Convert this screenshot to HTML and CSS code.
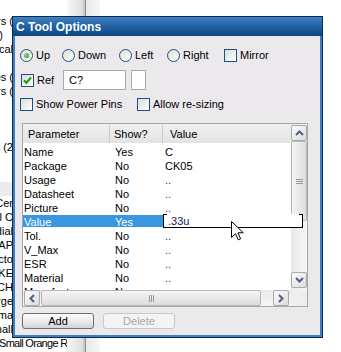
FILE: index.html
```html
<!DOCTYPE html>
<html lang="en">
<head>
    <meta charset="UTF-8">
    <meta name="viewport" content="width=device-width, initial-scale=1.0">
    <title>C Tool Options</title>
    <link rel="stylesheet" href="styles.css">
</head>
<body>
    <div class="desktop">
        <div class="bg-list">
            <div class="bg-row">Capacitors (</div>
            <div class="bg-row short">(1)</div>
            <div class="bg-row">Electrical</div>
            <div class="bg-row"></div>
            <div class="bg-row">Diodes (</div>
            <div class="bg-row">Inductors (</div>
            <div class="bg-row"></div>
            <div class="bg-row"></div>
            <div class="bg-row"></div>
            <div class="bg-row">Resistors (2</div>
            <div class="bg-row"></div>
            <div class="bg-row"></div>
            <div class="bg-row band"></div>
            <div class="bg-row">Disc Cer</div>
            <div class="bg-row">Axial C</div>
            <div class="bg-row">Radial</div>
            <div class="bg-row">CAP</div>
            <div class="bg-row">Inducto</div>
            <div class="bg-row">SPIKE</div>
            <div class="bg-row">SWITCH</div>
            <div class="bg-row">Large</div>
            <div class="bg-row">Sma</div>
            <div class="bg-row">Small</div>
            <div class="bg-row full">Small Orange Resistor</div>
        </div>
        <div class="bg-bar"></div>
    </div>

    <div class="dialog">
        <div class="title-bar">C Tool Options</div>
        <div class="dlg-body">
            <div class="opt-row">
                <label class="opt w-up"><span class="radio on"></span>Up</label>
                <label class="opt w-down"><span class="radio"></span>Down</label>
                <label class="opt w-left"><span class="radio"></span>Left</label>
                <label class="opt w-right"><span class="radio"></span>Right</label>
                <label class="opt"><span class="check"></span>Mirror</label>
            </div>
            <div class="ref-row">
                <label class="opt w-ref">
                    <span class="check">
                        <svg width="11" height="11" viewBox="0 0 11 11"><path d="M2 5.2 L4.4 7.8 L9 2.6" fill="none" stroke="#21a121" stroke-width="2.2"/></svg>
                    </span>Ref
                </label>
                <div class="field ref-field">C?</div>
                <div class="field small-field"></div>
            </div>
            <div class="flag-row">
                <label class="opt w-power"><span class="check"></span>Show Power Pins</label>
                <label class="opt"><span class="check"></span>Allow re-sizing</label>
            </div>

            <div class="param-list">
                <div class="table">
                    <div class="row head"><span class="c1">Parameter</span><span class="c2">Show?</span><span class="c3">Value</span></div>
                    <div class="row"><span class="c1">Name</span><span class="c2">Yes</span><span class="c3">C</span></div>
                    <div class="row"><span class="c1">Package</span><span class="c2">No</span><span class="c3">CK05</span></div>
                    <div class="row"><span class="c1">Usage</span><span class="c2">No</span><span class="c3 dots">..</span></div>
                    <div class="row"><span class="c1">Datasheet</span><span class="c2">No</span><span class="c3 dots">..</span></div>
                    <div class="row"><span class="c1">Picture</span><span class="c2">No</span><span class="c3 dots">..</span></div>
                    <div class="row selected"><span class="c1">Value</span><span class="c2">Yes</span><span class="c3"></span></div>
                    <div class="row"><span class="c1">Tol.</span><span class="c2">No</span><span class="c3 dots">..</span></div>
                    <div class="row"><span class="c1">V_Max</span><span class="c2">No</span><span class="c3 dots">..</span></div>
                    <div class="row"><span class="c1">ESR</span><span class="c2">No</span><span class="c3 dots">..</span></div>
                    <div class="row"><span class="c1">Material</span><span class="c2">No</span><span class="c3 dots">..</span></div>
                    <div class="row"><span class="c1">Manufacturer</span><span class="c2">No</span><span class="c3 dots">..</span></div>
                </div>
                <div class="vscroll">
                    <div class="sb-btn">
                        <svg width="9" height="6" viewBox="0 0 9 6"><path d="M1 5 L4.5 1.5 L8 5" fill="none" stroke="#4d6185" stroke-width="2"/></svg>
                    </div>
                    <div class="thumb v-thumb"><span class="grip"></span></div>
                    <div class="track"></div>
                    <div class="sb-btn">
                        <svg width="9" height="6" viewBox="0 0 9 6"><path d="M1 1 L4.5 4.5 L8 1" fill="none" stroke="#4d6185" stroke-width="2"/></svg>
                    </div>
                </div>
                <div class="hscroll">
                    <div class="sb-btn first">
                        <svg width="6" height="9" viewBox="0 0 6 9"><path d="M5 1 L1.5 4.5 L5 8" fill="none" stroke="#4d6185" stroke-width="2"/></svg>
                    </div>
                    <div class="thumb h-thumb"><span class="grip"></span></div>
                    <div class="track"></div>
                    <div class="sb-btn last">
                        <svg width="6" height="9" viewBox="0 0 6 9"><path d="M1 1 L4.5 4.5 L1 8" fill="none" stroke="#4d6185" stroke-width="2"/></svg>
                    </div>
                </div>
                <div class="corner"></div>
                <div class="cell-editor">.33u</div>
            </div>

            <div class="btn-row">
                <button class="btn">Add</button>
                <button class="btn" disabled>Delete</button>
            </div>
        </div>
    </div>

    <svg class="cursor" width="14" height="21" viewBox="0 0 14 21">
        <path d="M0.5 0.5 V16.5 L4.5 12.7 L7.2 18.8 L9.6 17.8 L7 11.8 H12.3 Z" fill="#fff" stroke="#000" stroke-width="1"/>
    </svg>
</body>
</html>
```

FILE: styles.css
```css
* {
    box-sizing: border-box;
}
body {
    margin: 0;
    width: 341px;
    height: 352px;
    overflow: hidden;
    position: relative;
    background-color: #fff;
    font-family: "Liberation Sans", Arial, sans-serif;
    font-size: 11px;
    color: #000;
}

/* window behind the dialog */
.desktop {
    display: flex;
    height: 352px;
}
.bg-list {
    width: 67px;
    overflow: hidden;
    padding-top: 14px;
}
.bg-row {
    width: 13px;
    height: 14px;
    line-height: 14px;
    display: flex;
    justify-content: flex-end;
    white-space: nowrap;
}
.bg-row.short {
    width: 3px;
}
.bg-row.band {
    width: 67px;
    background-color: #ebebeb;
}
.bg-row.full {
    width: 68px;
    margin-left: -1px;
    justify-content: flex-start;
    letter-spacing: -0.7px;
}
.bg-bar {
    width: 33px;
    background: linear-gradient(to right, #f7f7f7 0, #dedede 16px, #c8c8c8 16px, #c8c8c8 18px, #8f8f8f 18px, #8f8f8f 19px, #e8e8e8 19px, #f7f7f7 33px);
}

/* dialog */
.dialog {
    position: absolute;
    left: 12px;
    top: 16px;
    width: 311px;
    height: 322px;
    border: 1px solid #0b2a4c;
    background-color: #3b80c4;
    padding: 0 2px 2px;
    display: flex;
    flex-direction: column;
}
.title-bar {
    height: 19px;
    margin: 0 -2px;
    padding: 1px 0 0 3px;
    line-height: 18px;
    background: linear-gradient(#3f80c2, #2564a5 45%, #0a4680);
    color: #fff;
    font-weight: bold;
    font-size: 12px;
}
.dlg-body {
    flex: 1;
    background-color: #ece9ed;
    padding-top: 12px;
}

.opt {
    display: inline-flex;
    align-items: center;
    gap: 3px;
    white-space: nowrap;
}
.w-up { width: 42px; }
.w-down { width: 57px; }
.w-left { width: 48px; }
.w-right { width: 57px; }
.w-ref { width: 42px; }
.w-power { width: 117px; }

.radio, .check {
    width: 13px;
    height: 13px;
    border: 1px solid #1c5180;
    background: linear-gradient(135deg, #dcdcd7, #fff);
    display: inline-flex;
    align-items: center;
    justify-content: center;
    flex: none;
}
.radio {
    border-radius: 50%;
}
.radio.on::after {
    content: "";
    width: 5px;
    height: 5px;
    border-radius: 50%;
    background: radial-gradient(circle at 35% 35%, #7ee07e, #1f9b1f);
}

.opt-row {
    display: flex;
    height: 14px;
    padding-left: 5px;
    align-items: center;
}
.ref-row {
    display: flex;
    height: 20px;
    margin-top: 8px;
    padding-left: 6px;
    align-items: center;
}
.field {
    height: 20px;
    border: 1px solid #a9a9a9;
    background-color: #fff;
    line-height: 18px;
}
.ref-field {
    width: 63px;
    padding-left: 5px;
}
.small-field {
    width: 15px;
    margin-left: 5px;
}
.flag-row {
    display: flex;
    height: 14px;
    margin-top: 7px;
    padding-left: 5px;
    align-items: center;
}

/* parameter list */
.param-list {
    position: relative;
    width: 286px;
    height: 184px;
    margin: 12px 0 0 7px;
    border: 1px solid #a7a7a7;
    background-color: #fff;
    display: grid;
    grid-template-columns: 268px 16px;
    grid-template-rows: 166px 16px;
}
.table {
    overflow: hidden;
}
.row {
    display: flex;
    height: 14px;
    line-height: 14px;
    padding-top: 2px;
    white-space: nowrap;
}
.row.head {
    height: 19px;
    line-height: 19px;
    padding-top: 1px;
    background: linear-gradient(#f0f0f0, #e3e3e3);
}
.c1 {
    width: 87px;
    padding-left: 1px;
}
.c2 {
    width: 53px;
    padding-left: 5px;
}
.c3 {
    flex: 1;
    padding-left: 2px;
}
.head .c1 {
    padding-left: 5px;
    box-shadow: inset -1px 0 #c9c9c9;
}
.head .c2 {
    padding-left: 4px;
    box-shadow: inset -1px 0 #c9c9c9;
}
.head .c3 {
    padding-left: 7px;
}
.dots {
    color: #3c1481;
}
.row.selected .c1,
.row.selected .c2 {
    background-color: #3b96e0;
    color: #fff;
}

.vscroll {
    display: flex;
    flex-direction: column;
    padding: 1px 0 2px;
    background: linear-gradient(to right, #e8e8e8, #f7f7f7);
}
.hscroll {
    display: flex;
    background: linear-gradient(#e8e8e8, #f7f7f7);
}
.sb-btn {
    width: 16px;
    height: 16px;
    flex: none;
    border: 1px solid #a9a9a9;
    border-radius: 2px;
    background: linear-gradient(135deg, #fbfbfb, #dcdcdc);
    display: flex;
    align-items: center;
    justify-content: center;
}
.sb-btn.first {
    margin-left: 1px;
}
.sb-btn.last {
    margin-right: 2px;
}
.thumb {
    flex: none;
    border: 1px solid #b7b7b7;
    border-radius: 2px;
    display: flex;
    align-items: center;
    justify-content: center;
}
.v-thumb {
    height: 80px;
    background: linear-gradient(to right, #f5f5f5, #dddddd);
}
.h-thumb {
    width: 220px;
    margin-left: 1px;
    background: linear-gradient(#f5f5f5, #dddddd);
}
.track {
    flex: 1;
}
.grip {
    width: 7px;
    height: 5px;
    background: repeating-linear-gradient(#9a9a9a 0 1px, transparent 1px 2px);
}
.h-thumb .grip {
    width: 5px;
    height: 7px;
    background: repeating-linear-gradient(to right, #9a9a9a 0 1px, transparent 1px 2px);
}
.corner {
    background-color: #eeeeee;
}
.cell-editor {
    position: absolute;
    left: 140px;
    top: 90px;
    width: 140px;
    height: 14px;
    padding-left: 4px;
    line-height: 13px;
    background-color: #fff;
    border: 1px solid #000;
    border-top-color: transparent;
    color: #1b1464;
}
.cell-editor::before,
.cell-editor::after {
    content: "";
    position: absolute;
    top: -1px;
    width: 4px;
    height: 1px;
    background-color: #000;
}
.cell-editor::before {
    left: -1px;
}
.cell-editor::after {
    right: -1px;
}

/* buttons */
.btn-row {
    display: flex;
    gap: 9px;
    margin-top: 6px;
    padding-left: 7px;
}
.btn {
    width: 72px;
    height: 16px;
    padding: 0;
    font: inherit;
    line-height: 14px;
    color: #000;
    border: 1px solid #707070;
    border-radius: 3px;
    background: linear-gradient(#fdfdfd, #e8e8e8 60%, #d2d2d2);
}
.btn:disabled {
    color: #a8a8a8;
    border-color: #c8c8c8;
    background: #f4f4f4;
}

.cursor {
    position: absolute;
    left: 231px;
    top: 221px;
}
```
